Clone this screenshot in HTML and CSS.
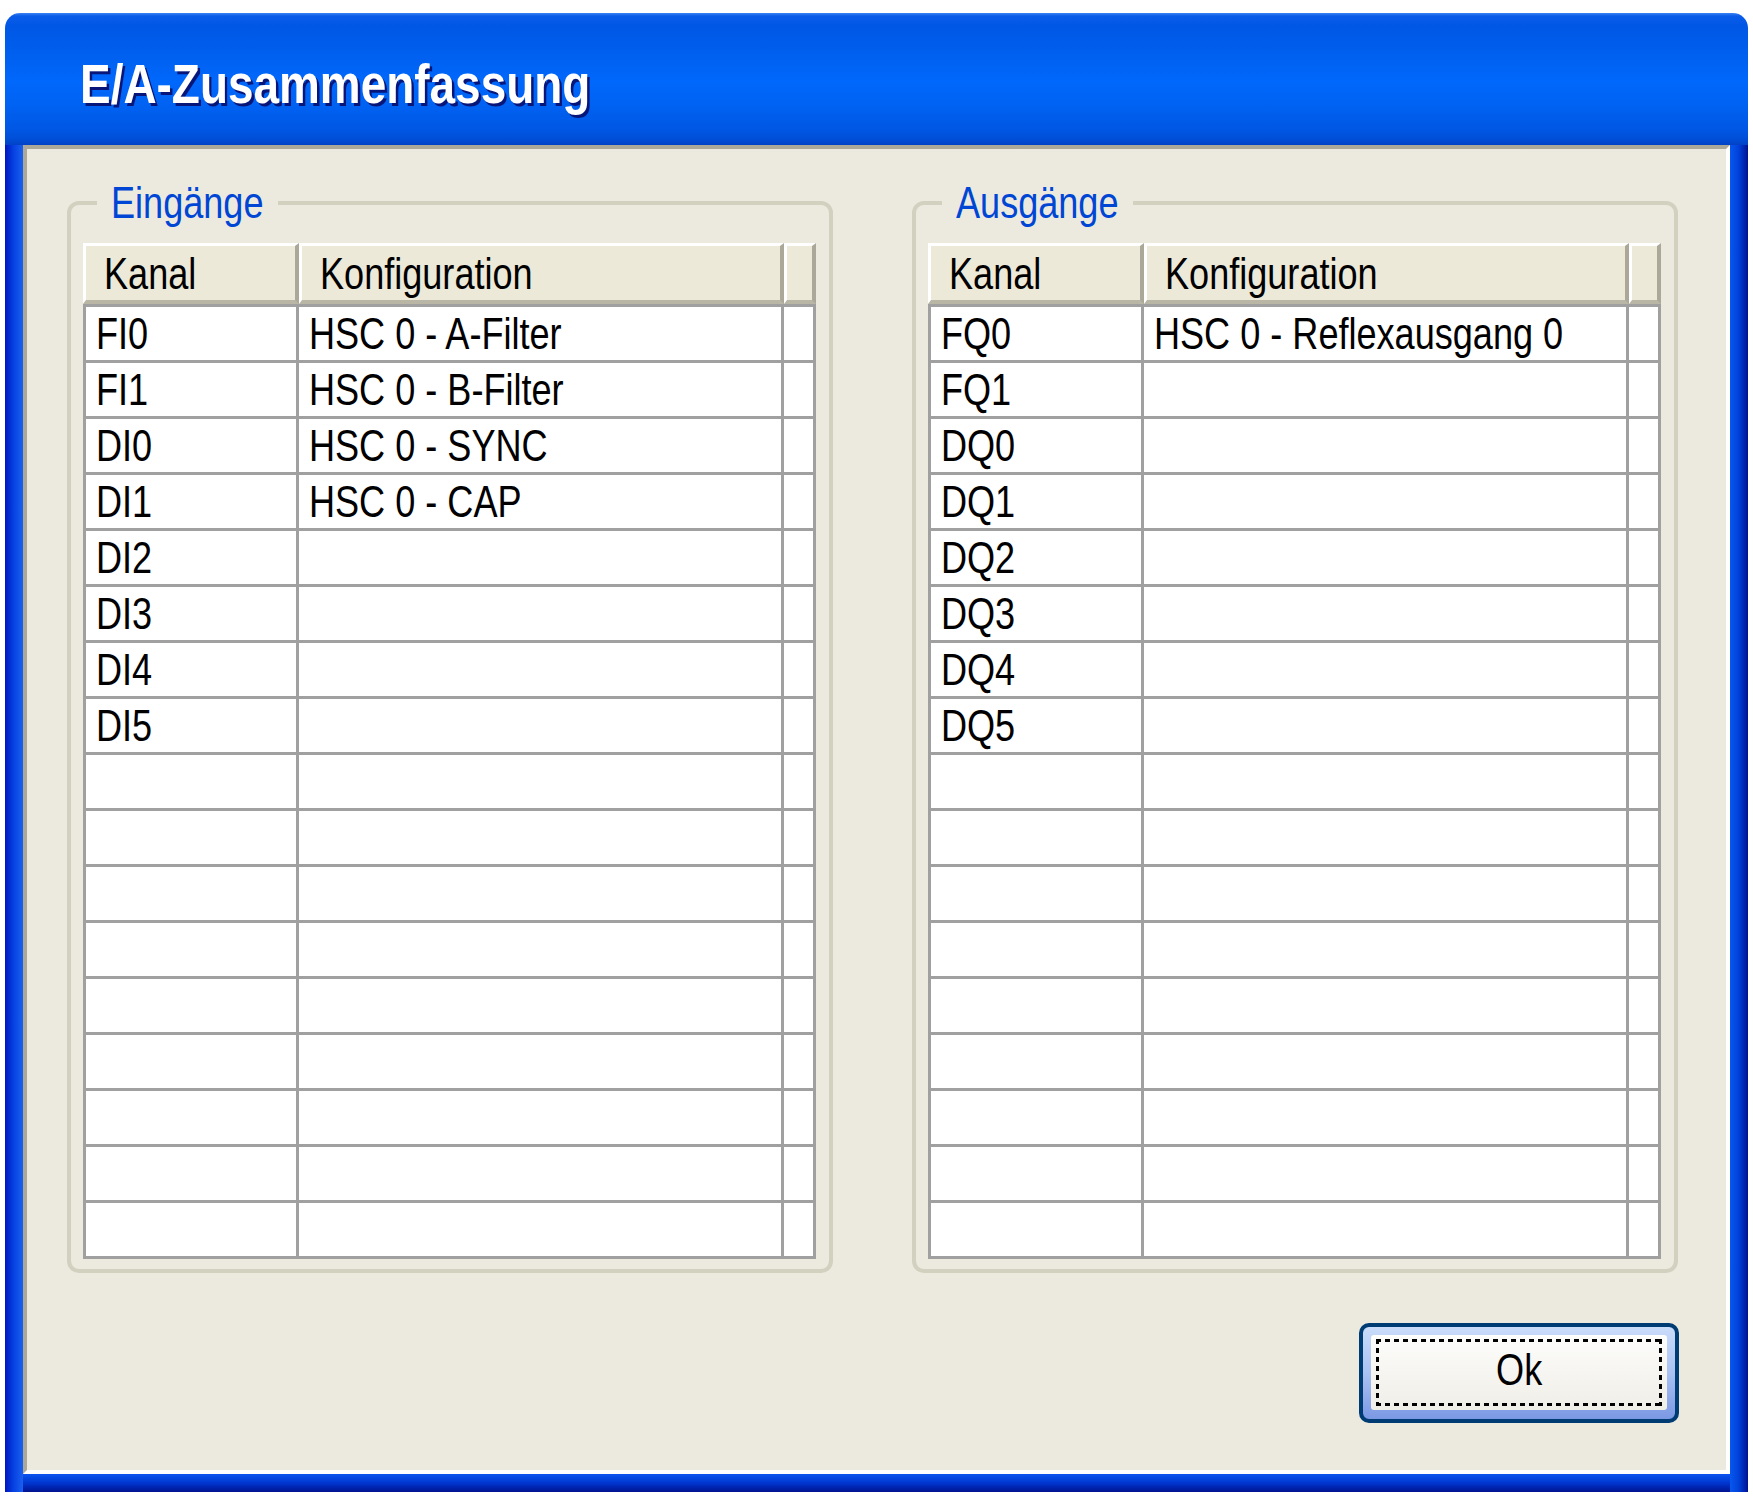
FILE: index.html
```html
<!DOCTYPE html>
<html lang="de">
<head>
<meta charset="utf-8">
<title>E/A-Zusammenfassung</title>
<link rel="stylesheet" href="styles.css">
</head>
<body>
<div class="window">
  <div class="titlebar"><h1 class="title"><span class="nx">E/A-Zusammenfassung</span></h1></div>
  <div class="frame">
    <div class="client">
      <div class="groups">
        <fieldset class="group">
          <legend class="lg-in"><span class="nx">Eingänge</span></legend>
          <div class="grid">
            <div class="thead">
              <div class="th"><span class="nx">Kanal</span></div><div class="th"><span class="nx">Konfiguration</span></div><div class="th"></div>
            </div>
            <div class="tbody">
              <div class="row"><div class="td"><span class="nx">FI0</span></div><div class="td"><span class="nx">HSC 0 - A-Filter</span></div><div class="td"></div></div>
              <div class="row"><div class="td"><span class="nx">FI1</span></div><div class="td"><span class="nx">HSC 0 - B-Filter</span></div><div class="td"></div></div>
              <div class="row"><div class="td"><span class="nx">DI0</span></div><div class="td"><span class="nx">HSC 0 - SYNC</span></div><div class="td"></div></div>
              <div class="row"><div class="td"><span class="nx">DI1</span></div><div class="td"><span class="nx">HSC 0 - CAP</span></div><div class="td"></div></div>
              <div class="row"><div class="td"><span class="nx">DI2</span></div><div class="td"></div><div class="td"></div></div>
              <div class="row"><div class="td"><span class="nx">DI3</span></div><div class="td"></div><div class="td"></div></div>
              <div class="row"><div class="td"><span class="nx">DI4</span></div><div class="td"></div><div class="td"></div></div>
              <div class="row"><div class="td"><span class="nx">DI5</span></div><div class="td"></div><div class="td"></div></div>
              <div class="row"><div class="td"></div><div class="td"></div><div class="td"></div></div>
              <div class="row"><div class="td"></div><div class="td"></div><div class="td"></div></div>
              <div class="row"><div class="td"></div><div class="td"></div><div class="td"></div></div>
              <div class="row"><div class="td"></div><div class="td"></div><div class="td"></div></div>
              <div class="row"><div class="td"></div><div class="td"></div><div class="td"></div></div>
              <div class="row"><div class="td"></div><div class="td"></div><div class="td"></div></div>
              <div class="row"><div class="td"></div><div class="td"></div><div class="td"></div></div>
              <div class="row"><div class="td"></div><div class="td"></div><div class="td"></div></div>
              <div class="row"><div class="td"></div><div class="td"></div><div class="td"></div></div>
            </div>
          </div>
        </fieldset>
        <fieldset class="group">
          <legend class="lg-out"><span class="nx">Ausgänge</span></legend>
          <div class="grid">
            <div class="thead">
              <div class="th"><span class="nx">Kanal</span></div><div class="th"><span class="nx">Konfiguration</span></div><div class="th"></div>
            </div>
            <div class="tbody">
              <div class="row"><div class="td"><span class="nx">FQ0</span></div><div class="td"><span class="nx">HSC 0 - Reflexausgang 0</span></div><div class="td"></div></div>
              <div class="row"><div class="td"><span class="nx">FQ1</span></div><div class="td"></div><div class="td"></div></div>
              <div class="row"><div class="td"><span class="nx">DQ0</span></div><div class="td"></div><div class="td"></div></div>
              <div class="row"><div class="td"><span class="nx">DQ1</span></div><div class="td"></div><div class="td"></div></div>
              <div class="row"><div class="td"><span class="nx">DQ2</span></div><div class="td"></div><div class="td"></div></div>
              <div class="row"><div class="td"><span class="nx">DQ3</span></div><div class="td"></div><div class="td"></div></div>
              <div class="row"><div class="td"><span class="nx">DQ4</span></div><div class="td"></div><div class="td"></div></div>
              <div class="row"><div class="td"><span class="nx">DQ5</span></div><div class="td"></div><div class="td"></div></div>
              <div class="row"><div class="td"></div><div class="td"></div><div class="td"></div></div>
              <div class="row"><div class="td"></div><div class="td"></div><div class="td"></div></div>
              <div class="row"><div class="td"></div><div class="td"></div><div class="td"></div></div>
              <div class="row"><div class="td"></div><div class="td"></div><div class="td"></div></div>
              <div class="row"><div class="td"></div><div class="td"></div><div class="td"></div></div>
              <div class="row"><div class="td"></div><div class="td"></div><div class="td"></div></div>
              <div class="row"><div class="td"></div><div class="td"></div><div class="td"></div></div>
              <div class="row"><div class="td"></div><div class="td"></div><div class="td"></div></div>
              <div class="row"><div class="td"></div><div class="td"></div><div class="td"></div></div>
            </div>
          </div>
        </fieldset>
      </div>
      <div class="actions">
        <button class="btn" type="button"><span class="btn-face"><span class="btn-focus"><span class="nx nx-c">Ok</span></span></span></button>
      </div>
    </div>
  </div>
</div>
</body>
</html>
```
FILE: styles.css
```css
html, body {
  margin: 0;
  padding: 0;
  background: #ffffff;
}
body {
  font-family: "Liberation Sans", Arial, sans-serif;
  font-size: 44px;
  color: #000;
}
/* narrow rendering of the Arial-like face (Arial Narrow look) */
.nx {
  display: inline-block;
  transform: scaleX(0.82);
  transform-origin: left center;
  white-space: nowrap;
}
.nx-c {
  transform-origin: center center;
}
.window {
  margin: 13px 0 0 5px;
  width: 1743px;
}
.titlebar {
  height: 132px;
  box-sizing: border-box;
  padding: 39px 0 0 75px;
  border-radius: 15px 15px 0 0;
  background: linear-gradient(to bottom,
    #3b82f4 0px, #0a5ce8 3px, #0057e5 10%, #005fee 30%,
    #0068fc 52%, #0062f2 70%, #0057e4 88%, #004fd8 95%, #0042c6 100%);
}
.title {
  margin: 0;
  font-weight: bold;
  font-size: 56px;
  line-height: 64px;
  color: #ffffff;
  text-shadow: 3px 3px 0 #08167a;
  white-space: nowrap;
}
.frame {
  padding: 0 18px 18px 18px;
  background:
    linear-gradient(to right, #0015c0 0%, #0540e0 45%, #1a60f0 100%) left top / 18px 100% no-repeat,
    linear-gradient(to right, #0858ee 0%, #0040d8 50%, #001290 100%) right top / 18px 100% no-repeat,
    linear-gradient(to bottom, #0a55ee 0%, #0036d0 50%, #00128e 100%) left bottom / 100% 18px no-repeat,
    #0048e0;
}
.client {
  background: #ece9de;
  border-top: 4px solid #aca899;
  border-left: 4px solid #aca899;
  border-right: 4px solid #ffffff;
  border-bottom: 4px solid #ffffff;
  padding: 29px 47px 47px 40px;
}
.groups {
  display: flex;
  gap: 79px;
}
.group {
  margin: 0;
  width: 766px;
  box-sizing: border-box;
  padding: 15px 13px 10px 12px;
  border: 4px solid #d2d0bf;
  border-radius: 12px;
  min-inline-size: 0;
}
.group legend {
  margin-left: 14px;
  padding: 0 14px;
  font-size: 44px;
  line-height: 50px;
  color: #0046d5;
  white-space: nowrap;
}
.lg-in { width: 153px; }
.lg-out { width: 163px; }
.grid {
  width: 733px;
  background: #ffffff;
}
.thead {
  display: grid;
  grid-template-columns: 216px 485px 32px;
}
.th {
  height: 61px;
  box-sizing: border-box;
  background: #ece9d8;
  border-top: 3px solid #ffffff;
  border-left: 3px solid #ffffff;
  border-right: 4px solid #aca899;
  border-bottom: 4px solid #b9b6a6;
  padding: 2px 0 0 18px;
  line-height: 52px;
  white-space: nowrap;
}
.tbody {
  border-top: 3px solid #a0a0a0;
  border-left: 3px solid #a0a0a0;
}
.row {
  display: grid;
  grid-template-columns: 213px 485px 32px;
}
.td {
  height: 56px;
  box-sizing: border-box;
  border-right: 3px solid #a0a0a0;
  border-bottom: 3px solid #a0a0a0;
  padding-left: 10px;
  line-height: 53px;
  white-space: nowrap;
}
.actions {
  display: flex;
  justify-content: flex-end;
  margin-top: 50px;
}
.btn {
  width: 320px;
  height: 100px;
  box-sizing: border-box;
  margin: 0;
  padding: 8px 8px 9px 8px;
  border: 4px solid #003c74;
  border-radius: 10px;
  background: linear-gradient(to bottom, #cadcfa 0%, #a9c2f2 50%, #7b98e4 100%);
  font-family: inherit;
  font-size: 44px;
  color: #000;
  display: flex;
  cursor: default;
}
.btn-face {
  flex: 1;
  display: flex;
  padding: 4px 5px 3px 5px;
  border-radius: 3px;
  background: linear-gradient(to bottom, #fdfdfc 0%, #f6f5f1 50%, #efeee7 100%);
}
.btn-focus {
  flex: 1;
  height: 67px;
  box-sizing: border-box;
  padding-bottom: 5px;
  line-height: 62px;
  text-align: center;
  background:
    repeating-linear-gradient(90deg, #000 0 5px, transparent 5px 9px) left top / 100% 3px no-repeat,
    repeating-linear-gradient(90deg, #000 0 5px, transparent 5px 9px) left bottom / 100% 3px no-repeat,
    repeating-linear-gradient(180deg, #000 0 5px, transparent 5px 9px) left top / 3px 100% no-repeat,
    repeating-linear-gradient(180deg, #000 0 5px, transparent 5px 9px) right top / 3px 100% no-repeat;
}
```
